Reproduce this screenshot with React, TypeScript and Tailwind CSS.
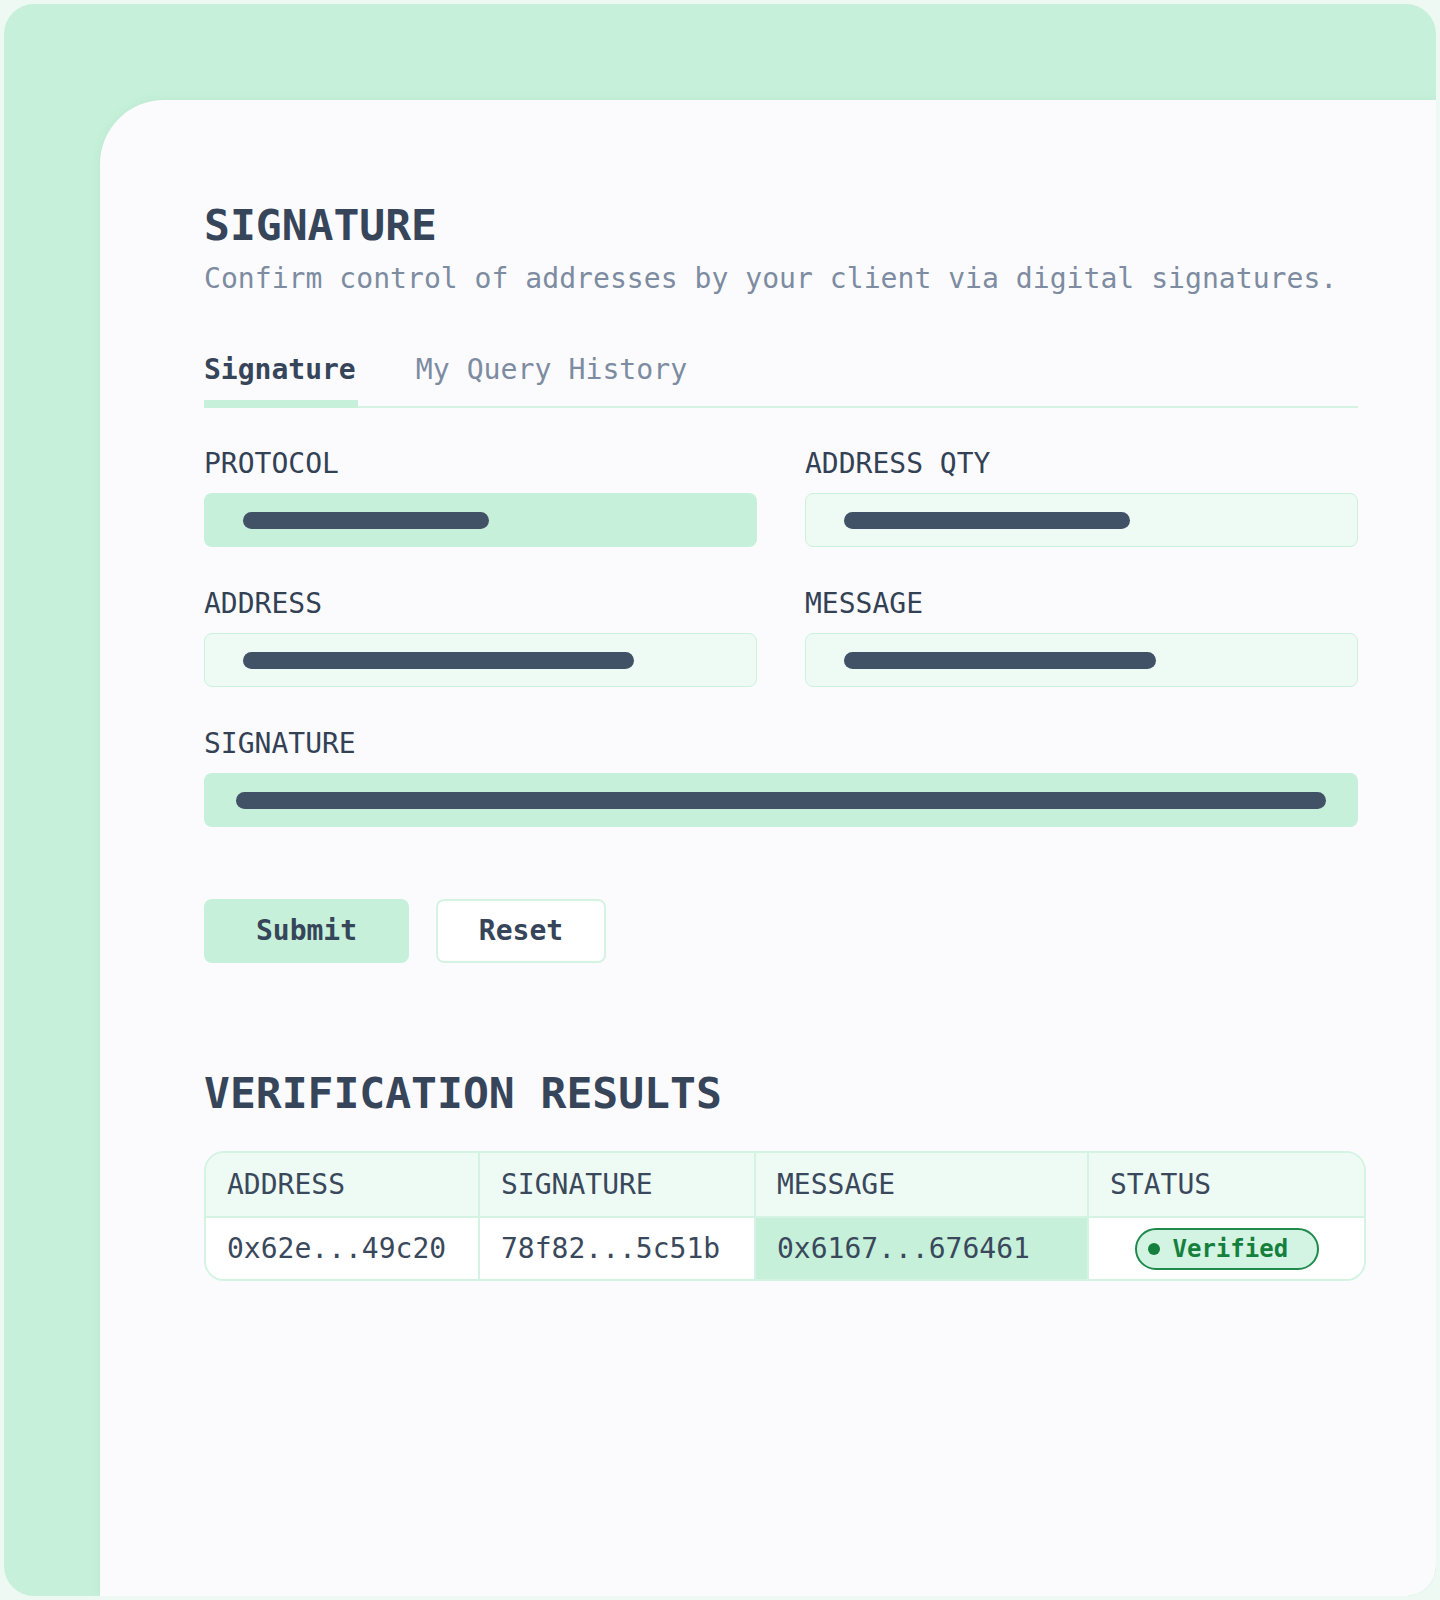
export default function App() {
  const label = "text-[28px] leading-[36px] text-[#334155]";
  return (
    <div className="w-[1440px] h-[1600px] bg-[#eef9f3] p-[4px] font-['DejaVu_Sans_Mono',monospace]">
      <div className="flex h-[1592px] w-[1432px] flex-col overflow-hidden rounded-[30px] bg-[#c6f0d9] pl-[96px] pt-[96px]">
        <div className="flex-1 rounded-tl-[64px] rounded-br-[30px] bg-[#fbfbfe] pl-[104px] pt-[100px] shadow-[0_0_10px_rgba(120,180,150,0.12)]">
          <div className="w-[1154px]">
            <h1 className="text-[43px] leading-[50px] font-bold text-[#364559]">SIGNATURE</h1>
            <p className="mt-[11px] text-[28.1px] leading-[36px] text-[#7d8ca1]">
              Confirm control of addresses by your client via digital signatures.
            </p>

            <div className="mt-[55px] flex border-b-2 border-[#d4f3e3]">
              <div className="-mb-[2px] border-b-[8px] border-[#c6f0d9] pb-[10px] pr-[2px] text-[28px] leading-[36px] font-bold text-[#364559]">
                Signature
              </div>
              <div className="ml-[58px] pb-[18px] text-[28.2px] leading-[36px] text-[#7d8ca1]">My Query History</div>
            </div>

            <div className="mt-[38px] grid grid-cols-2 gap-x-[48px] gap-y-[39px]">
              <div>
                <div className={label}>PROTOCOL</div>
                <div className="mt-[11px] flex h-[54px] items-center rounded-[8px] bg-[#c6f0d9] pl-[39px]">
                  <div className="h-[17px] w-[246px] rounded-full bg-[#415166]" />
                </div>
              </div>
              <div>
                <div className={label}>ADDRESS QTY</div>
                <div className="mt-[11px] flex h-[54px] items-center rounded-[8px] border-[1.5px] border-[#cdf1de] bg-[#eefaf4] pl-[38px]">
                  <div className="h-[17px] w-[286px] rounded-full bg-[#415166]" />
                </div>
              </div>
              <div>
                <div className={label}>ADDRESS</div>
                <div className="mt-[11px] flex h-[54px] items-center rounded-[8px] border-[1.5px] border-[#cdf1de] bg-[#eefaf4] pl-[38px]">
                  <div className="h-[17px] w-[391px] rounded-full bg-[#415166]" />
                </div>
              </div>
              <div>
                <div className={label}>MESSAGE</div>
                <div className="mt-[11px] flex h-[54px] items-center rounded-[8px] border-[1.5px] border-[#cdf1de] bg-[#eefaf4] pl-[38px]">
                  <div className="h-[17px] w-[312px] rounded-full bg-[#415166]" />
                </div>
              </div>
              <div className="col-span-2">
                <div className={label}>SIGNATURE</div>
                <div className="mt-[11px] flex h-[54px] items-center rounded-[8px] bg-[#c6f0d9] px-[32px]">
                  <div className="h-[17px] flex-1 rounded-full bg-[#415166]" />
                </div>
              </div>
            </div>

            <div className="mt-[72px] flex gap-[27px]">
              <button className="h-[64px] w-[205px] rounded-[8px] bg-[#c6f0d9] text-[28px] font-bold text-[#364559]">
                Submit
              </button>
              <button className="h-[64px] w-[170px] rounded-[8px] border-2 border-[#d4f3e3] bg-white text-[28px] font-bold text-[#364559]">
                Reset
              </button>
            </div>

            <h2 className="mt-[105px] text-[43px] leading-[50px] font-bold text-[#364559]">VERIFICATION RESULTS</h2>

            <div className="mt-[33px] w-[1162px] overflow-hidden rounded-[20px] border-2 border-[#d4f3e3] text-[28px] leading-[36px] text-[#3a485c]">
              <div className="grid h-[63px] grid-cols-[274px_276px_333px_1fr] bg-[#eefaf4]">
                <div className="flex items-center border-r-2 border-[#d4f3e3] pl-[21px]">ADDRESS</div>
                <div className="flex items-center border-r-2 border-[#d4f3e3] pl-[21px]">SIGNATURE</div>
                <div className="flex items-center border-r-2 border-[#d4f3e3] pl-[21px]">MESSAGE</div>
                <div className="flex items-center pl-[21px]">STATUS</div>
              </div>
              <div className="grid h-[63px] grid-cols-[274px_276px_333px_1fr] border-t-2 border-[#d4f3e3] bg-white">
                <div className="flex items-center border-r-2 border-[#d4f3e3] pl-[21px]">0x62e...49c20</div>
                <div className="flex items-center border-r-2 border-[#d4f3e3] pl-[21px]">78f82...5c51b</div>
                <div className="flex items-center border-r-2 border-[#d4f3e3] bg-[#c6f0d9] pl-[21px]">0x6167...676461</div>
                <div className="flex items-center justify-center">
                  <div className="flex h-[42px] w-[184px] items-center gap-[13px] rounded-full border-2 border-[#1f8a4c] bg-[#d3f4e2] pl-[11px]">
                    <div className="h-[12px] w-[12px] rounded-full bg-[#15803d]" />
                    <span className="text-[24px] leading-[30px] font-bold text-[#15803d]">Verified</span>
                  </div>
                </div>
              </div>
            </div>
          </div>
        </div>
      </div>
    </div>
  );
}
